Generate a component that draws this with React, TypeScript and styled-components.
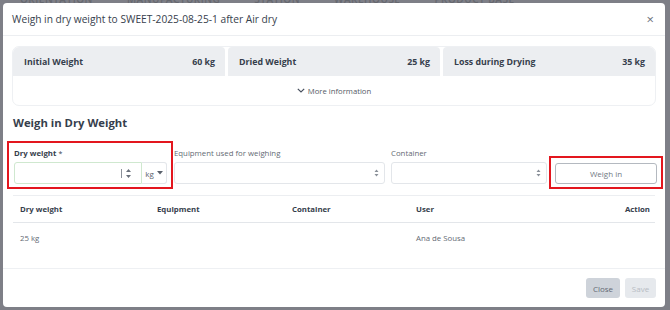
import styled, { createGlobalStyle } from 'styled-components';

const GlobalStyle = createGlobalStyle`
  html, body {
    margin: 0;
    padding: 0;
  }
  body {
    font-family: 'Open Sans', 'Noto Sans', sans-serif;
    color: #3a4250;
  }
  * {
    box-sizing: border-box;
  }
`;

const summary = [
  { label: 'Initial Weight', value: '60 kg' },
  { label: 'Dried Weight', value: '25 kg' },
  { label: 'Loss during Drying', value: '35 kg' },
];

const columns = ['Dry weight', 'Equipment', 'Container', 'User', 'Action'];

const rows = [{ weight: '25 kg', equipment: '', container: '', user: 'Ana de Sousa' }];

const SortArrows = () => (
  <svg width="5" height="8" viewBox="0 0 5 8">
    <path d="M2.5 0.5 L4.5 3 H0.5 Z M2.5 7.5 L4.5 5 H0.5 Z" fill="#8a9099" />
  </svg>
);

const App = () => {
  return (
    <>
      <GlobalStyle />
      <S.Page>
        <S.BackdropNav>
          <span>ORIENTATION</span>
          <span>MANUFACTURING</span>
          <span>STATION</span>
          <span>WAREHOUSE</span>
          <span>PRODUCT BASE</span>
        </S.BackdropNav>
        <S.Modal>
          <S.Header>
            <S.Title>Weigh in dry weight to SWEET-2025-08-25-1 after Air dry</S.Title>
            <S.CloseX>×</S.CloseX>
          </S.Header>
          <S.Body>
            <S.SummaryCard>
              <S.SummaryGrid>
                {summary.map((item) => (
                  <S.SummaryBox key={item.label}>
                    <span>{item.label}</span>
                    <span>{item.value}</span>
                  </S.SummaryBox>
                ))}
              </S.SummaryGrid>
              <S.MoreInfo>
                <svg width="8" height="5" viewBox="0 0 8 5">
                  <path d="M0.8 0.8 L4 4 L7.2 0.8" fill="none" stroke="#4a5260" strokeWidth="1.2" />
                </svg>
                More information
              </S.MoreInfo>
            </S.SummaryCard>

            <S.SectionTitle>Weigh in Dry Weight</S.SectionTitle>

            <S.FormRow>
              <S.Highlight>
                <S.Label strong>
                  Dry weight <S.Req>*</S.Req>
                </S.Label>
                <S.InputGroup>
                  <S.NumberInput>
                    <S.Caret />
                    <svg width="7" height="11" viewBox="0 0 7 11">
                      <path d="M3.5 1 L6 4 H1 Z M3.5 10 L6 7 H1 Z" fill="#6a717c" />
                    </svg>
                  </S.NumberInput>
                  <S.UnitSelect>
                    kg
                    <svg width="6" height="4" viewBox="0 0 6 4">
                      <path d="M0 0 H6 L3 3.5 Z" fill="#5a616c" />
                    </svg>
                  </S.UnitSelect>
                </S.InputGroup>
              </S.Highlight>

              <S.Field width={211} gap={1}>
                <S.Label>Equipment used for weighing</S.Label>
                <S.Select>
                  <SortArrows />
                </S.Select>
              </S.Field>

              <S.Field width={156} gap={6}>
                <S.Label>Container</S.Label>
                <S.Select>
                  <SortArrows />
                </S.Select>
              </S.Field>

              <S.ButtonHighlight>
                <S.WeighButton>Weigh in</S.WeighButton>
              </S.ButtonHighlight>
            </S.FormRow>

            <S.Table>
              <S.TableHead>
                {columns.map((col) => (
                  <S.HeadCell key={col} alignRight={col === 'Action'}>
                    {col}
                  </S.HeadCell>
                ))}
              </S.TableHead>
              {rows.map((row) => (
                <S.TableRow key={row.user}>
                  <S.Cell>{row.weight}</S.Cell>
                  <S.Cell>{row.equipment}</S.Cell>
                  <S.Cell>{row.container}</S.Cell>
                  <S.Cell>{row.user}</S.Cell>
                  <S.Cell />
                </S.TableRow>
              ))}
            </S.Table>
          </S.Body>
          <S.Footer>
            <S.FooterButton variant="close">Close</S.FooterButton>
            <S.FooterButton variant="save">Save</S.FooterButton>
          </S.Footer>
        </S.Modal>
      </S.Page>
    </>
  );
};

const S = {
  Page: styled.div`
    position: relative;
    width: 670px;
    height: 310px;
    padding: 3px 5px 3px 3px;
    background: #7e7f87;
    overflow: hidden;
  `,

  BackdropNav: styled.div`
    position: absolute;
    top: -8px;
    left: 20px;
    display: flex;
    gap: 34px;
    font-size: 10px;
    font-weight: 600;
    color: #66686f;
    letter-spacing: 0.5px;
  `,

  Modal: styled.div`
    position: relative;
    display: flex;
    flex-direction: column;
    width: 662px;
    height: 304px;
    background: #ffffff;
    border-radius: 4px;
  `,

  Header: styled.div`
    display: flex;
    align-items: center;
    justify-content: space-between;
    flex-shrink: 0;
    height: 33px;
    padding: 0 11px 0 9px;
    border-bottom: 1px solid #eceef1;
  `,

  Title: styled.h5`
    margin: 0;
    font-size: 10.2px;
    font-weight: 400;
    color: #363e4c;
  `,

  CloseX: styled.span`
    font-size: 13px;
    line-height: 1;
    color: #6b717b;
  `,

  Body: styled.div`
    flex: 1;
    padding: 10px 9px 0 9px;
  `,

  SummaryCard: styled.div`
    border: 1px solid #eef0f3;
    border-radius: 7px;
    overflow: hidden;
  `,

  SummaryGrid: styled.div`
    display: grid;
    grid-template-columns: repeat(3, 1fr);
    gap: 3px;
  `,

  SummaryBox: styled.div`
    display: flex;
    align-items: center;
    justify-content: space-between;
    height: 29px;
    padding: 0 10px 0 11px;
    background: #eceef1;
    border-radius: 4px 4px 0 0;
    font-size: 8.8px;
    font-weight: 700;
    color: #363e4c;
  `,

  MoreInfo: styled.div`
    display: flex;
    align-items: center;
    justify-content: center;
    gap: 3px;
    height: 29px;
    font-size: 7.7px;
    color: #545b66;
  `,

  SectionTitle: styled.h4`
    margin: 9px 0 0 1px;
    height: 16px;
    line-height: 16px;
    font-size: 11.3px;
    font-weight: 700;
    color: #363e4c;
  `,

  FormRow: styled.div`
    display: flex;
    align-items: flex-start;
    margin: 10px -6px 0 -5px;
  `,

  Highlight: styled.div`
    flex-shrink: 0;
    width: 166px;
    height: 48px;
    padding: 5px 4px 0 5px;
    border: 2px solid #e3161e;
  `,

  Label: styled.div<{ strong?: boolean }>`
    height: 14px;
    line-height: 10px;
    font-size: 7.8px;
    font-weight: ${(props) => (props.strong ? 700 : 400)};
    color: ${(props) => (props.strong ? '#363e4c' : '#646a74')};
    white-space: nowrap;
  `,

  Req: styled.span`
    font-weight: 400;
    font-size: 7px;
  `,

  InputGroup: styled.div`
    display: flex;
    height: 22px;
  `,

  NumberInput: styled.div`
    display: flex;
    align-items: center;
    justify-content: flex-end;
    gap: 3px;
    width: 128px;
    height: 22px;
    padding-right: 9px;
    border: 1px solid #cfe8cf;
    border-radius: 3px 0 0 3px;
  `,

  Caret: styled.span`
    width: 1px;
    height: 9px;
    background: #8b9099;
  `,

  UnitSelect: styled.div`
    display: flex;
    align-items: center;
    justify-content: center;
    gap: 3px;
    flex: 1;
    border: 1px solid #e3e6ea;
    border-left: none;
    border-radius: 0 3px 3px 0;
    font-size: 8px;
    color: #5a616c;
  `,

  Field: styled.div<{ width: number; gap: number }>`
    flex-shrink: 0;
    width: ${(props) => props.width}px;
    margin-left: ${(props) => props.gap}px;
    padding-top: 7px;
  `,

  Select: styled.div`
    display: flex;
    align-items: center;
    justify-content: flex-end;
    height: 22px;
    padding-right: 5px;
    border: 1px solid #e3e6ea;
    border-radius: 3px;
  `,

  ButtonHighlight: styled.div`
    flex-shrink: 0;
    width: 114px;
    height: 33px;
    margin-top: 15px;
    margin-left: 2px;
    padding: 5px 4px 0 4px;
    border: 2px solid #e3161e;
  `,

  WeighButton: styled.button`
    display: block;
    width: 102px;
    height: 21px;
    padding: 0;
    border: 1px solid #b4b9c0;
    border-radius: 3px;
    background: #ffffff;
    font-family: inherit;
    font-size: 8px;
    color: #737984;
  `,

  Table: styled.div`
    margin-top: 6px;
    margin-left: 1px;
    width: 642px;
    border-top: 1px solid #eceef1;
  `,

  TableHead: styled.div`
    display: grid;
    grid-template-columns: 137px 135px 124px 1fr auto;
    align-items: center;
    height: 27px;
    padding: 0 5px 0 7px;
    border-bottom: 1px solid #e3e6ea;
  `,

  HeadCell: styled.div<{ alignRight?: boolean }>`
    font-size: 7.8px;
    font-weight: 700;
    color: #363e4c;
    text-align: ${(props) => (props.alignRight ? 'right' : 'left')};
  `,

  TableRow: styled.div`
    display: grid;
    grid-template-columns: 137px 135px 124px 1fr auto;
    align-items: center;
    height: 29px;
    padding: 0 5px 0 7px;
  `,

  Cell: styled.div`
    font-size: 7.8px;
    color: #646a74;
  `,

  Footer: styled.div`
    display: flex;
    align-items: center;
    justify-content: flex-end;
    flex-shrink: 0;
    gap: 5px;
    height: 39px;
    padding: 0 9px 0 0;
    border-top: 1px solid #eef0f3;
  `,

  FooterButton: styled.button<{ variant: 'close' | 'save' }>`
    width: ${(props) => (props.variant === 'close' ? 34 : 31)}px;
    height: 20px;
    padding: 0;
    border: none;
    border-radius: 3px;
    background: ${(props) => (props.variant === 'close' ? '#ced3da' : '#e6e9ed')};
    font-family: inherit;
    font-size: 8px;
    color: ${(props) => (props.variant === 'close' ? '#646a74' : '#b7bcc3')};
  `,
};

export default App;
